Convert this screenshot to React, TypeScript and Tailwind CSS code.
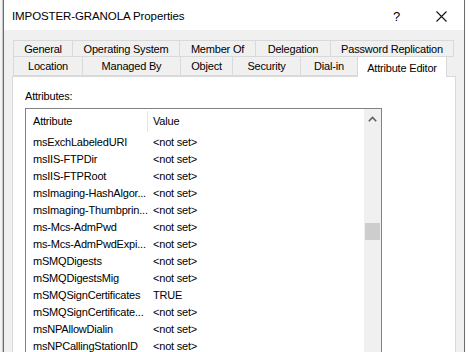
import React from "react";

const rows: [string, string][] = [
  ["msExchLabeledURI", "<not set>"],
  ["msIIS-FTPDir", "<not set>"],
  ["msIIS-FTPRoot", "<not set>"],
  ["msImaging-HashAlgor...", "<not set>"],
  ["msImaging-Thumbprin...", "<not set>"],
  ["ms-Mcs-AdmPwd", "<not set>"],
  ["ms-Mcs-AdmPwdExpi...", "<not set>"],
  ["mSMQDigests", "<not set>"],
  ["mSMQDigestsMig", "<not set>"],
  ["mSMQSignCertificates", "TRUE"],
  ["mSMQSignCertificate...", "<not set>"],
  ["msNPAllowDialin", "<not set>"],
  ["msNPCallingStationID", "<not set>"],
];

const topTabs = [
  { label: "General", w: "w-[59px]" },
  { label: "Operating System", w: "w-[107px]" },
  { label: "Member Of", w: "w-[76px]" },
  { label: "Delegation", w: "w-[75px]" },
  { label: "Password Replication", w: "w-[124px]" },
];

const bottomTabs = [
  { label: "Location", w: "w-[69px]" },
  { label: "Managed By", w: "w-[98px]" },
  { label: "Object", w: "w-[52px]" },
  { label: "Security", w: "w-[68px]" },
  { label: "Dial-in", w: "w-[57px]" },
];

export default function App() {
  return (
    <div
      className="flex h-[352px] w-[468px] overflow-hidden bg-white text-[11px] tracking-[-0.2px] text-black"
      style={{ fontFamily: '"Liberation Sans", Arial, sans-serif' }}
    >
      {/* window behind */}
      <div className="w-[3px] shrink-0 border-r border-[#c8c8c8] bg-[#f4f4f4]" />

      {/* dialog */}
      <div className="flex w-[462px] shrink-0 flex-col border-x border-[#6b6b6b]">
        {/* title bar */}
        <div className="flex h-[30px] shrink-0 items-center bg-white pl-[8px] pt-[3px]">
          <span className="text-[11.5px] tracking-[-0.1px]">IMPOSTER-GRANOLA Properties</span>
          <span className="ml-auto mr-[36px] text-[13px]">?</span>
          <svg width="11" height="11" viewBox="0 0 11 11" className="mr-[17px]">
            <path d="M0.5 0.5 L10.5 10.5 M10.5 0.5 L0.5 10.5" stroke="#111" strokeWidth="1.1" />
          </svg>
        </div>

        {/* body */}
        <div className="flex flex-1 flex-col bg-[#f0f0f0] pl-[8px] pr-[8px] pt-[10px]">
          {/* row 1 tabs */}
          <div className="ml-[1px] flex h-[17px]">
            {topTabs.map((t) => (
              <div
                key={t.label}
                className={`${t.w} flex items-center justify-center border border-r-0 border-[#d9d9d9] pt-[2px] last:border-r`}
              >
                {t.label}
              </div>
            ))}
          </div>
          {/* row 2 tabs */}
          <div className="relative z-10 ml-[1px] flex h-[19px] items-end">
            {bottomTabs.map((t) => (
              <div
                key={t.label}
                className={`${t.w} flex h-[19px] items-center justify-center border border-r-0 border-t-0 border-[#d9d9d9] pt-[1px]`}
              >
                {t.label}
              </div>
            ))}
            <div className="-mb-[1px] flex h-[21px] w-[90px] items-start justify-center border border-b-0 border-[#d9d9d9] bg-white pt-[3px]">
              Attribute Editor
            </div>
          </div>

          {/* panel */}
          <div className="flex flex-1 flex-col border border-[#d9d9d9] bg-white pl-[12px] pr-[73px]">
            <div className="mt-[12px] h-[14px] leading-[14px]">Attributes:</div>
            <div className="mt-[5px] flex flex-1 border border-b-0 border-[#828282]">
              <div className="flex-1">
                <div className="flex h-[24px] items-center">
                  <div className="w-[121px] pl-[7px]">Attribute</div>
                  <div className="h-[21px] w-px bg-[#e5e5e5]" />
                  <div className="pl-[5px]">Value</div>
                </div>
                {rows.map(([a, v]) => (
                  <div key={a} className="flex h-[17px] items-center whitespace-nowrap pt-[1px]">
                    <div className="w-[122px] pl-[7px]">{a}</div>
                    <div className="pl-[5px]">{v}</div>
                  </div>
                ))}
              </div>
              {/* scrollbar */}
              <div className="flex w-[17px] flex-col items-center bg-[#f0f0f0]">
                <svg width="9" height="6" viewBox="0 0 9 6" className="mt-[7px]">
                  <path d="M0.8 5.2 L4.5 1.5 L8.2 5.2" fill="none" stroke="#606060" strokeWidth="1.6" />
                </svg>
                <div className="mt-[101px] h-[17px] w-[15px] bg-[#cdcdcd]" />
              </div>
            </div>
          </div>
        </div>
      </div>

      <div className="w-[3px] shrink-0 bg-white" />
    </div>
  );
}
